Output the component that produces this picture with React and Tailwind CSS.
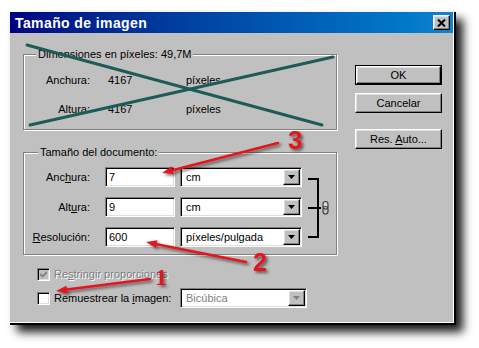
const sunken =
  "border border-t-[#808080] border-l-[#808080] border-b-white border-r-white shadow-[inset_1px_1px_0_#000,inset_-1px_-1px_0_#dfdfdf]";
const raised =
  "bg-[#c0c0c0] border border-t-white border-l-white border-b-black border-r-black shadow-[inset_-1px_-1px_0_#808080,inset_1px_1px_0_#dfdfdf]";
const etched = "border border-[#808080] shadow-[inset_1px_1px_0_#fff,1px_1px_0_#fff]";

function DropBtn({ disabled }) {
  return (
    <div className={`${raised} w-[17px] h-[16px] flex items-center justify-center`}>
      <svg width="7" height="4" viewBox="0 0 7 4">
        <path d="M0 0h7L3.5 4z" fill={disabled ? "#808080" : "#000"} />
      </svg>
    </div>
  );
}

function Select({ value, width, disabled }) {
  return (
    <div
      className={`${sunken} ${width} h-[20px] bg-white flex items-center justify-between pl-[5px] pr-[1px] ${
        disabled ? "text-[#808080]" : "text-black"
      }`}
    >
      <span>{value}</span>
      <DropBtn disabled={disabled} />
    </div>
  );
}

function Arrow({ x1, y1, x2, y2 }) {
  const dx = x2 - x1;
  const dy = y2 - y1;
  const len = Math.hypot(dx, dy);
  const ux = dx / len;
  const uy = dy / len;
  const bx = x2 - ux * 11;
  const by = y2 - uy * 11;
  const pts = `${x2},${y2} ${bx - uy * 4},${by + ux * 4} ${bx + uy * 4},${by - ux * 4}`;
  return (
    <g filter="url(#sh)">
      <line x1={x1} y1={y1} x2={bx} y2={by} stroke="#e3141c" strokeWidth="2.5" strokeLinecap="round" />
      <polygon points={pts} fill="#e3141c" />
    </g>
  );
}

function App() {
  return (
    <div className="relative w-[479px] h-[348px] bg-white overflow-hidden font-['Liberation_Sans',Arial,sans-serif] text-[11px] leading-[13px] text-black">
      <div className="pl-[10px] pt-[12px]">
        {/* dialog window */}
        <div className="w-[446px] h-[313px] flex flex-col border-r-2 border-b-2 border-black shadow-[7px_7px_9px_rgba(0,0,0,0.9)]">
          <div className="flex-1 flex flex-col bg-[#c0c0c0] border-r border-b border-white">
            {/* title bar */}
            <div className="h-[21px] flex items-center justify-between pl-[5px] pr-[3px] bg-gradient-to-r from-[#000080] to-[#1084d0]">
              <span className="text-white font-bold text-[14px] leading-[16px] tracking-[0.4px]">Tamaño de imagen</span>
              <div className={`${raised} w-[17px] h-[15px] flex items-center justify-center`}>
                <svg width="9" height="8" viewBox="0 0 9 8">
                  <path d="M1 0.5L8 7.5M8 0.5L1 7.5" stroke="#000" strokeWidth="2" />
                </svg>
              </div>
            </div>

            {/* body */}
            <div className="flex pl-[13px] pt-[21px]">
              <div className="w-[314px] flex flex-col">
                {/* pixel dimensions */}
                <div className={`${etched} relative h-[76px] flex flex-col pt-[19px] gap-[16px]`}>
                  <span className="absolute -top-[7px] left-[12px] px-[2px] bg-[#c0c0c0]">
                    Dimensiones en píxeles: 49,7M
                  </span>
                  <div className="flex">
                    <span className="w-[66px] text-right">Anchura:</span>
                    <span className="ml-[18px] w-[78px]">4167</span>
                    <span>píxeles</span>
                  </div>
                  <div className="flex">
                    <span className="w-[66px] text-right">Altura:</span>
                    <span className="ml-[18px] w-[78px]">4167</span>
                    <span>píxeles</span>
                  </div>
                </div>

                {/* document size */}
                <div className={`${etched} relative mt-[22px] h-[103px] flex pt-[14px]`}>
                  <span className="absolute -top-[7px] left-[14px] px-[2px] bg-[#c0c0c0]">Tamaño del documento:</span>
                  <div className="flex flex-col gap-[10px]">
                    <div className="flex items-center h-[20px]">
                      <span className="w-[66px] text-right">
                        Anc<span className="underline">h</span>ura:
                      </span>
                      <div className={`${sunken} ml-[15px] w-[70px] h-[20px] bg-white pl-[3px] flex items-center`}>7</div>
                      <div className="ml-[5px]">
                        <Select value="cm" width="w-[122px]" />
                      </div>
                    </div>
                    <div className="flex items-center h-[20px]">
                      <span className="w-[66px] text-right">
                        Alt<span className="underline">u</span>ra:
                      </span>
                      <div className={`${sunken} ml-[15px] w-[70px] h-[20px] bg-white pl-[3px] flex items-center`}>9</div>
                      <div className="ml-[5px]">
                        <Select value="cm" width="w-[122px]" />
                      </div>
                    </div>
                    <div className="flex items-center h-[20px]">
                      <span className="w-[66px] text-right">
                        <span className="underline">R</span>esolución:
                      </span>
                      <div className={`${sunken} ml-[15px] w-[70px] h-[20px] bg-white pl-[3px] flex items-center`}>600</div>
                      <div className="ml-[5px]">
                        <Select value="píxeles/pulgada" width="w-[122px]" />
                      </div>
                    </div>
                  </div>
                  <svg className="ml-[6px]" width="24" height="80" viewBox="0 0 24 80">
                    <path d="M0 12H10V70H0M0 41H13" stroke="#000" strokeWidth="2" fill="none" />
                    <rect x="15" y="34.5" width="5" height="7.5" rx="2.5" fill="#d8d8d8" stroke="#404040" strokeWidth="1.2" />
                    <rect x="15" y="39.5" width="5" height="7.5" rx="2.5" fill="none" stroke="#404040" strokeWidth="1.2" />
                  </svg>
                </div>

                {/* checkboxes */}
                <div className="mt-[13px] flex flex-col gap-[7px]">
                  <div className="flex items-center h-[13px]">
                    <div className={`${sunken} ml-[14px] w-[13px] h-[13px] bg-[#c0c0c0] flex items-center justify-center`}>
                      <svg width="7" height="7" viewBox="0 0 7 7">
                        <path d="M0 3L2.5 5.5L7 1" stroke="#808080" strokeWidth="1.8" fill="none" />
                      </svg>
                    </div>
                    <span className="ml-[4px] text-[#808080] [text-shadow:1px_1px_0_#fff]">
                      Re<span className="underline">s</span>tringir proporciones
                    </span>
                  </div>
                  <div className="flex items-center h-[20px]">
                    <div className={`${sunken} ml-[14px] w-[13px] h-[13px] bg-white`} />
                    <span className="ml-[4px] w-[126px]">
                      Remuestrear la <span className="underline">i</span>magen:
                    </span>
                    <Select value="Bicúbica" width="w-[127px]" disabled />
                  </div>
                </div>
              </div>

              {/* buttons */}
              <div className="ml-[18px] pt-[11px] flex flex-col">
                <div className="w-[87px] h-[20px] border border-black">
                  <div className={`${raised} w-full h-full flex items-center justify-center`}>OK</div>
                </div>
                <div className={`${raised} mt-[8px] w-[87px] h-[20px] flex items-center justify-center`}>Cancelar</div>
                <div className={`${raised} mt-[16px] w-[87px] h-[20px] flex items-center justify-center`}>
                  <span>
                    Res. <span className="underline">A</span>uto...
                  </span>
                </div>
              </div>
            </div>
          </div>
        </div>
      </div>

      {/* annotations drawn over the screenshot */}
      <svg className="absolute inset-0 pointer-events-none" width="479" height="348" viewBox="0 0 479 348">
        <defs>
          <filter id="sh" x="-20%" y="-50%" width="140%" height="200%">
            <feDropShadow dx="2" dy="2" stdDeviation="1.5" floodColor="#000" floodOpacity="0.55" />
          </filter>
          <filter id="soft">
            <feGaussianBlur stdDeviation="0.6" />
          </filter>
        </defs>
        <g stroke="#1d5c57" strokeWidth="3" strokeLinecap="round" filter="url(#soft)">
          <line x1="27" y1="45" x2="322" y2="125" />
          <line x1="30" y1="125" x2="333" y2="57" />
        </g>
        <Arrow x1={278} y1={143} x2={162} y2={173} />
        <Arrow x1={246} y1={262} x2={146} y2={242} />
        <Arrow x1={150} y1={279} x2={56} y2={291} />
        <g filter="url(#sh)" fill="#e3141c" fontWeight="bold">
          <text x="288" y="149" fontSize="26" fontFamily="Liberation Sans, Arial, sans-serif">3</text>
          <text x="253" y="271" fontSize="25" fontFamily="Liberation Sans, Arial, sans-serif">2</text>
          <text x="155" y="285" fontSize="24" fontFamily="Liberation Serif, serif">1</text>
        </g>
      </svg>
    </div>
  );
}

export default App;
